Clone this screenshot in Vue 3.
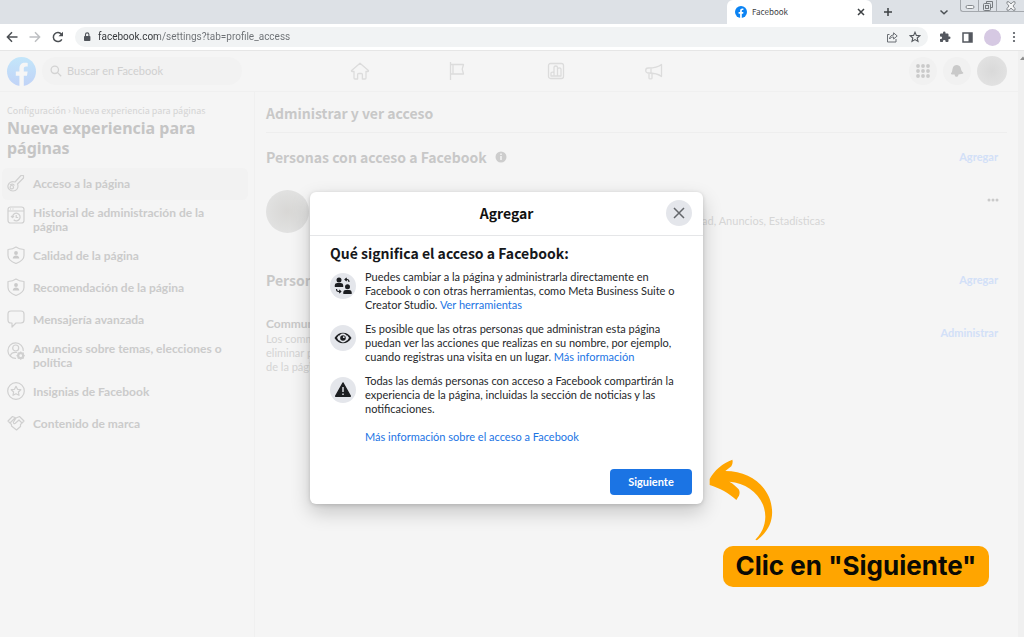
<script setup>
const menu = [
  { text: 'Acceso a la página', icon: 'key', active: true },
  { text: 'Historial de administración de la página', icon: 'history' },
  { text: 'Calidad de la página', icon: 'shield' },
  { text: 'Recomendación de la página', icon: 'shield' },
  { text: 'Mensajería avanzada', icon: 'chat' },
  { text: 'Anuncios sobre temas, elecciones o política', icon: 'usergear' },
  { text: 'Insignias de Facebook', icon: 'badge' },
  { text: 'Contenido de marca', icon: 'hands' },
]
</script>

<template>
  <div class="browser">
    <div class="tabs">
      <div class="tab">
        <svg class="favicon" viewBox="0 0 24 24" aria-hidden="true">
          <circle cx="12" cy="12" r="12" fill="#0b83f3" />
          <path d="M10.2 24v-8.6H7.2V12h3V9.5c0-3 1.8-4.7 4.5-4.7 1 0 2.1.2 2.1.2v2.900h-1.400c-1.400 0-1.800.9-1.800 1.800V12h3.200l-.5 3.400h-2.700V24z" fill="#fff" />
        </svg>
        <span class="tab-title">Facebook</span>
        <button class="bare" aria-label="Cerrar pestaña">
          <svg width="8" height="8" viewBox="0 0 8 8"><path d="M1 1l6 6M7 1L1 7" stroke="#3c4043" stroke-width="1.5" /></svg>
        </button>
      </div>
      <button class="bare plus" aria-label="Nueva pestaña">
        <svg width="10" height="10" viewBox="0 0 10 10"><path d="M5 1v8M1 5h8" stroke="#3c4043" stroke-width="1.5" /></svg>
      </button>
      <button class="bare chevron" aria-label="Buscar pestañas">
        <svg width="10" height="10" viewBox="0 0 10 10"><path d="M1.5 3.5L5 6.8l3.500-3.300" fill="none" stroke="#4b5054" stroke-width="1.5" /></svg>
      </button>
      <div class="window">
        <button class="bare" aria-label="Minimizar">
          <svg width="10" height="10" viewBox="0 0 10 10"><rect x="1" y="4.500" width="8" height="3" rx="1.500" fill="#f4f5f6" stroke="#85898d" /></svg>
        </button>
        <button class="bare" aria-label="Restaurar">
          <svg width="10" height="10" viewBox="0 0 10 10" fill="none" stroke="#777b7f"><path d="M3.500 2.500v-2h6v6h-2" /><rect x=".5" y="2.500" width="7" height="7" rx="1" /><rect x="2.500" y="4.500" width="3" height="3" /></svg>
        </button>
        <button class="bare wide" aria-label="Cerrar">
          <svg width="10" height="10" viewBox="0 0 10 10"><path d="M1 .8h2L5 3 7 .8h2v1.700L7 5l2 2.500v1.700H7L5 7 3 9.200H1V7.500L3 5 1 2.500z" fill="#f4f5f6" stroke="#85898d" /></svg>
        </button>
      </div>
    </div>

    <div class="toolbar">
      <button class="bare" aria-label="Atrás">
        <svg width="12" height="12" viewBox="0 0 12 12" fill="none" stroke="#4b4f53" stroke-width="1.5"><path d="M11.500 6H1.500M6 1.300L1.400 6 6 10.700" /></svg>
      </button>
      <button class="bare" aria-label="Adelante">
        <svg width="12" height="12" viewBox="0 0 12 12" fill="none" stroke="#bdbfc2" stroke-width="1.500"><path d="M.5 6h10M6 1.300L10.600 6 6 10.700" /></svg>
      </button>
      <button class="bare" aria-label="Recargar">
        <svg width="12" height="12" viewBox="0 0 12 12"><path d="M9.800 8.300a4.500 4.500 0 1 1-.4-5" fill="none" stroke="#4b4f53" stroke-width="1.500" /><path d="M11 .8v4.500H6.500z" fill="#4b4f53" /></svg>
      </button>
      <div class="address">
        <svg width="8" height="10" viewBox="0 0 8 10"><rect x="1" y="4" width="6.400" height="5" rx=".8" fill="#50545a" /><path d="M2.500 4V2.600a1.700 1.700 0 0 1 3.400 0V4" fill="none" stroke="#50545a" stroke-width="1.100" /></svg>
        <input class="url" aria-label="Dirección" value="facebook.com/settings?tab=profile_access" />
        <button class="bare" aria-label="Compartir">
          <svg width="12" height="12" viewBox="0 0 12 12" fill="none" stroke="#6b6f74"><path d="M3.500 3.500h-2v7.500h8.500V8" /><path d="M3.500 8C3.800 5.500 5.200 4 7.600 4V1.800L11.200 5 7.600 8V6C5.800 6 4.500 6.600 3.500 8z" /></svg>
        </button>
        <button class="bare" aria-label="Favoritos">
          <svg width="12" height="12" viewBox="0 0 12 12"><path d="M6 1.200l1.400 3.200 3.500.3-2.700 2.300.8 3.400-3-1.800-3 1.800.8-3.400L1.100 4.700l3.500-.3z" fill="none" stroke="#54585d" stroke-width="1.100" /></svg>
        </button>
      </div>
      <button class="bare" aria-label="Extensiones">
        <svg width="12" height="12" viewBox="0 0 24 24"><path d="M20.500 11H19V7a2 2 0 0 0-2-2h-4V3.500a2.500 2.500 0 0 0-5 0V5H4a2 2 0 0 0-2 2v3.800h1.500a2.700 2.700 0 0 1 0 5.400H2V20c0 1.100.9 2 2 2h3.800v-1.500a2.700 2.700 0 0 1 5.400 0V22H17a2 2 0 0 0 2-2v-4h1.500a2.500 2.500 0 0 0 0-5z" fill="#54585f" /></svg>
      </button>
      <button class="bare" aria-label="Panel lateral">
        <svg width="11" height="11" viewBox="0 0 11 11"><rect x="1" y="1" width="9" height="9" fill="none" stroke="#54585f" stroke-width="1.500" /><path d="M6.500 1H10v9H6.500z" fill="#54585f" /></svg>
      </button>
      <button class="profile" aria-label="Perfil"></button>
      <button class="bare" aria-label="Menú">
        <svg width="4" height="12" viewBox="0 0 4 12" fill="#54585f"><circle cx="2" cy="2" r="1.100" /><circle cx="2" cy="6" r="1.100" /><circle cx="2" cy="10" r="1.100" /></svg>
      </button>
    </div>

    <div class="viewport">
      <div class="page">
        <header class="top">
          <div class="brand">
            <svg class="logo" viewBox="0 0 28 28" aria-hidden="true">
              <defs><linearGradient id="lg" x1="0" y1="0" x2="0" y2="1"><stop offset="0" stop-color="#c3e6fa" /><stop offset="1" stop-color="#c1d3f7" /></linearGradient></defs>
              <circle cx="14" cy="14" r="14" fill="url(#lg)" />
              <path d="M12 28V18H8.500v-4H12v-3c0-3.600 2.100-5.500 5.300-5.500 1.500 0 2.700.2 2.700.2v3.400h-1.700c-1.700 0-2.100 1-2.100 2V14h3.700l-.6 4h-3.100v10z" fill="#f6f6f6" />
            </svg>
            <label class="search">
              <svg width="12" height="12" viewBox="0 0 12 12" fill="none" stroke="#d3d3d3" stroke-width="1.300"><circle cx="4.800" cy="4.800" r="3.700" /><path d="M7.600 7.600l3.600 3.600" /></svg>
              <input type="search" placeholder="Buscar en Facebook" aria-label="Buscar en Facebook" />
            </label>
          </div>
          <nav class="nav">
            <a href="#" aria-label="Inicio"><svg width="20" height="20" viewBox="0 0 20 20"><path d="M10 2.200L1.600 9.500c-.3.400 0 1 .6 1H4V17c0 .6.400 1 1 1h2.600v-4.500c0-.6.400-1 1-1h2.800c.6 0 1 .4 1 1V18H15c.6 0 1-.4 1-1v-6.500h1.800c.6 0 .9-.6.600-1z" /></svg></a>
            <a href="#" aria-label="Páginas"><svg width="20" height="20" viewBox="0 0 20 20"><path d="M2.500 1v18M2.500 3.500h13l-1.300 4.700 1.300 4.800h-13M5 3.500V13" /></svg></a>
            <a href="#" aria-label="Estadísticas"><svg width="20" height="20" viewBox="0 0 20 20"><rect x="2.500" y="2.500" width="15" height="15" rx="2" /><path d="M5 15v-3c0-1.300 3-1.300 3 0v3zM8 15V6.500C8 4.500 11.500 4.500 11.500 6.500V15zM11.500 15V8c0-1.500 3.500-1.500 3.500 0v7z" /></svg></a>
            <a href="#" aria-label="Anuncios"><svg width="20" height="20" viewBox="0 0 20 20"><path d="M17.500 3.500v12C14 12.500 10 12 4 12c-3 0-3-5 0-5 6 0 10-.5 13.500-3.500zM7 7v5M5 12v5.200c0 1 3 1 3 0V12" /></svg></a>
          </nav>
          <div class="tools">
            <button class="circle" aria-label="Menú"><svg width="14" height="14" viewBox="0 0 14 14" fill="#cacaca"><template v-for="r in 3" :key="r"><circle v-for="c in 3" :key="c" :cx="c * 5 - 3" :cy="r * 5 - 3" r="1.900" /></template></svg></button>
            <button class="circle" aria-label="Notificaciones"><svg width="14" height="14" viewBox="0 0 14 14"><path d="M2 10.500c-1 0-1.300-.8-.8-1.400C2.500 7.500 2 6.500 2.700 4.300 3.300 2.100 5 1 7 1.100c2.500.2 3.600 2 4 4 .3 1.700.9 2.500 1.900 3.200.7.500.5 1.300-.3 1.500L8.500 10.500c-.2 1.500-1 2.300-2 2.300s-1.800-.8-1.900-2.300z" fill="#c9c9c9" /></svg></button>
            <button class="avatar-small" aria-label="Cuenta"></button>
          </div>
        </header>

        <div class="columns">
          <aside class="side">
            <p class="crumbs">Configuración › Nueva experiencia para páginas</p>
            <h1>Nueva experiencia para páginas</h1>
            <a v-for="item in menu" :key="item.text" href="#" class="item" :class="{ active: item.active }">
              <svg v-if="item.icon === 'key'" class="icon" viewBox="0 0 18 18"><path d="M8 8L14 1.500h2.500V4L10.500 10c1.500 4-1 7-4.500 7-3.500 0-5.500-3-5-5.500C1.700 8.500 4.500 7 8 8z" /><circle cx="4.800" cy="13.200" r="1.700" /><path d="M3 11c2-1.200 3.500-1 4.500.5" /></svg>
              <svg v-else-if="item.icon === 'history'" class="icon" viewBox="0 0 18 18"><rect x="1" y="1" width="16" height="16" rx="2.500" /><path d="M1 5h16M3 3h1M5.500 3h1M5.500 11a3.800 3.800 0 1 1 1.200 2.800M4 10l1.500 1.500L7 10M9.200 9v2.500h2" /></svg>
              <svg v-else-if="item.icon === 'shield'" class="icon" viewBox="0 0 18 18"><path d="M9 1c2.500 1.800 5 2.300 8 2.500v6c0 4-4 6.500-8 8-4-1.500-8-4-8-8v-6C4 3.300 6.500 2.800 9 1z" /><circle class="solid" cx="9" cy="7" r="1.900" /><path class="solid" d="M5.700 12.500c0-4 6.600-4 6.600 0z" /></svg>
              <svg v-else-if="item.icon === 'chat'" class="icon" viewBox="0 0 18 18"><path d="M4 1h10c2 0 3 1 3 3v6c0 2-1 3-3 3H9l-4 4v-4H4c-2 0-3-1-3-3V4c0-2 1-3 3-3z" /></svg>
              <svg v-else-if="item.icon === 'usergear'" class="icon" viewBox="0 0 18 18"><path d="M9 16.300A7.700 7.700 0 1 1 16.300 9M3.300 14c.7-3 3-4 6.700-3.500" /><circle cx="8.700" cy="6" r="3" /><circle cx="13.700" cy="13.700" r="2.500" stroke-width="2.200" /><path d="M13.700 9.500v8.400M9.500 13.700h8.400M10.700 10.700l6 6M16.700 10.700l-6 6" stroke-dasharray="1.500 5.200" /></svg>
              <svg v-else-if="item.icon === 'badge'" class="icon" viewBox="0 0 18 18"><circle cx="9" cy="9" r="8.300" /><path d="M9 4.300l1.500 3 3.300.4-2.400 2.300.6 3.300L9 11.700l-3 1.600.6-3.300-2.400-2.300 3.300-.4z" /></svg>
              <svg v-else class="icon" viewBox="0 0 18 18"><path d="M1 7l4.500-4.500L9 4l3.500-1.500L17 7l-3.500 3.500v2L9.500 16 4.500 12V10.500zM3 9l5-5M15 9l-3-3-4 3.500c-1 .5-2-.5-1.500-1.500L9 4" /></svg>
              <span>{{ item.text }}</span>
            </a>
          </aside>

          <main class="content">
            <h2 class="heading">Administrar y ver acceso</h2>
            <div class="row first">
              <h2>Personas con acceso a Facebook
                <svg width="12" height="12" viewBox="0 0 12 12"><circle cx="6" cy="6" r="5.500" fill="#cdcdcd" /><path d="M6 5v4M6 2.500v1.500" stroke="#f5f5f5" stroke-width="1.500" /></svg>
              </h2>
              <a href="#">Agregar</a>
            </div>
            <div class="person">
              <div class="avatar"></div>
              <p>Actividad de la comunidad, Anuncios, Estadísticas</p>
              <button class="bare" aria-label="Más opciones"><svg width="12" height="4" viewBox="0 0 12 4" fill="#cacaca"><circle cx="2" cy="2" r="1.500" /><circle cx="6" cy="2" r="1.500" /><circle cx="10" cy="2" r="1.500" /></svg></button>
            </div>
            <div class="row">
              <h2>Personas</h2>
              <a href="#">Agregar</a>
            </div>
            <div class="row managers">
              <div>
                <h3>Community</h3>
                <p>Los community<br />eliminar posts<br />de la página.</p>
              </div>
              <a href="#">Administrar</a>
            </div>
          </main>
        </div>

        <div class="overlay">
          <section class="dialog" role="dialog" aria-labelledby="dlg-title">
            <header>
              <h2 id="dlg-title">Agregar</h2>
              <button class="close" aria-label="Cerrar"><svg width="12" height="12" viewBox="0 0 12 12"><path d="M1 1l10 10M11 1L1 11" stroke="#64676b" stroke-width="1.500" /></svg></button>
            </header>
            <div class="body">
              <h3>Qué significa el acceso a Facebook:</h3>
              <div class="point">
                <span class="disc"><svg width="18" height="18" viewBox="0 0 18 18" fill="#1c1e21"><circle cx="5" cy="3" r="2.500" /><path d="M.8 10V8.500C.8 6.800 2 6 3.300 6h3.400c1.300 0 2.500.8 2.500 2.500V10z" /><circle cx="13.500" cy="9.800" r="2.500" /><path d="M9.300 17v-1.500c0-1.700 1.200-2.500 2.500-2.500h3.400c1.300 0 2.500.8 2.500 2.500V17z" /><path d="M11.500 2.500h1.500c1.500 0 2 .8 2 2.500M12.700 1l-1.700 1.500 1.700 1.500M2.500 12c0 2 .8 2.500 2 2.500h2M5.200 13l1.600 1.500-1.600 1.500" fill="none" stroke="#1c1e21" stroke-width="1.100" /></svg></span>
                <p>Puedes cambiar a la página y administrarla directamente en Facebook o con otras herramientas, como Meta Business Suite o Creator Studio. <a href="#">Ver herramientas</a></p>
              </div>
              <div class="point">
                <span class="disc"><svg width="18" height="18" viewBox="0 0 18 18"><path d="M.5 9C4.500 2 13.500 2 17.500 9c-4 7-13 7-17 0z" fill="#1c1e21" /><circle cx="9" cy="9" r="3.600" fill="#1c1e21" stroke="#e4e6eb" stroke-width="1.600" /><path d="M3 8.800C4 7 5 6.300 5.600 6c-.8 2-.8 4 0 6C4.600 11.500 3.600 10.400 3 8.800zM15 8.800C14 7 13 6.300 12.400 6c.8 2 .8 4 0 6 1-.5 2-1.600 2.600-3.200z" fill="#e4e6eb" /><circle cx="9.800" cy="8.200" r=".9" fill="#e4e6eb" /></svg></span>
                <p>Es posible que las otras personas que administran esta página puedan ver las acciones que realizas en su nombre, por ejemplo, cuando registras una visita en un lugar. <a href="#">Más información</a></p>
              </div>
              <div class="point">
                <span class="disc"><svg width="18" height="18" viewBox="0 0 18 18"><path d="M9 2l7.300 13.200H1.700z" fill="#1c1e21" stroke="#1c1e21" stroke-width="1.500" stroke-linejoin="round" /><path d="M9 6v5M9 12.500V14" stroke="#e4e6eb" stroke-width="1.400" /></svg></span>
                <p>Todas las demás personas con acceso a Facebook compartirán la experiencia de la página, incluidas la sección de noticias y las notificaciones.</p>
              </div>
              <a class="more" href="#">Más información sobre el acceso a Facebook</a>
            </div>
            <footer><button class="next">Siguiente</button></footer>
          </section>
        </div>
      </div>
      <div class="scroll"><svg width="6" height="5" viewBox="0 0 6 5"><path d="M2 5l3-3.500 1 1V5z" fill="#8c8c8c" /></svg></div>
    </div>

    <div class="callout">
      <svg class="arrow" viewBox="58 58 192 246" aria-hidden="true"><path d="M60 118V136C90 145 118 160 140 181C143 176 144 173 148 168C151 160 150 153 147 149C139 140 130 132 119 126C165 130 203 155 220 195C235 235 225 272 197 300L202 302C235 277 250 245 247 210C243 145 185 94 107 94L125 80C129 73 130 66 128 60C100 70 73 92 60 118Z" fill="#ffa500" /></svg>
      <div class="note">Clic en "Siguiente"</div>
    </div>
  </div>
</template>

<style>
body { margin: 0; }
</style>

<style scoped>
* { box-sizing: border-box; }
.browser { position: relative; display: flex; flex-direction: column; height: 100vh; overflow: hidden; font: 11px/14px Lato, "Noto Sans", sans-serif; background: #f5f5f5; }
h1, h2, h3, p { margin: 0; }
a { text-decoration: none; }
button, input { font: inherit; border: 0; padding: 0; background: none; outline: 0; }
svg { flex: none; }
.bare { display: flex; align-items: center; justify-content: center; }

.tabs { display: flex; align-items: center; justify-content: flex-end; height: 24px; background: #dde1e6; }
.tab { display: flex; align-items: center; gap: 5px; width: 145px; height: 24px; padding: 0 7px 0 8px; background: #fff; border-radius: 6px 6px 0 0; }
.favicon { width: 12px; height: 12px; }
.tab-title { flex: 1; font: 8px/12px "Noto Sans CJK JP", sans-serif; color: #3c4043; }
.plus { margin-left: 11px; }
.chevron { margin-left: 46px; }
.window { display: flex; align-self: flex-start; height: 12px; margin-left: 11px; border: 1px solid #a4a8ad; border-width: 0 0 1px 1px; border-radius: 0 0 0 3px; }
.window .bare { width: 18px; border-right: 1px solid #a4a8ad; }
.window .wide { width: 27px; border-right: 0; }

.toolbar { display: flex; align-items: center; gap: 11px; height: 27px; padding: 0 8px 0 6px; background: #fff; border-bottom: 1px solid #e6e6e6; }
.address { display: flex; flex: 1; align-items: center; gap: 11px; height: 20px; padding: 0 7px 0 8px; border-radius: 10px; background: #f1f3f4; }
.url { flex: 1; min-width: 0; margin-left: -4px; height: 20px; font-family: Roboto, sans-serif; font-size: 10px; line-height: 20px; color: transparent; background: linear-gradient(90deg, #333639 61px, #6c7074 61px); -webkit-background-clip: text; background-clip: text; }
.profile { width: 17px; height: 17px; border-radius: 50%; background: #d6c9e3; }

.viewport { display: flex; flex: 1; min-height: 0; }
.page { position: relative; flex: 1; display: flex; flex-direction: column; }
.scroll { display: flex; justify-content: flex-end; width: 6px; padding-top: 4px; background: #f0f0f0; }
.top { display: grid; grid-template-columns: 1fr auto 1fr; align-items: center; height: 41px; padding: 0 11px 0 7px; border-bottom: 1px solid #f0f0f0; }
.brand { display: flex; align-items: center; gap: 6px; }
.logo { width: 29px; height: 29px; }
.search { display: flex; align-items: center; gap: 5px; width: 200px; height: 28px; margin-right: -60px; padding: 0 8px; border-radius: 14px; background: #f2f2f2; }
.search input { width: 150px; }
.search input::placeholder { color: #d0d0d0; }
.nav { display: flex; }
.nav a { display: flex; justify-content: center; width: 98px; }
.nav svg { fill: none; stroke: #dcdcdc; stroke-width: 1.300; stroke-linejoin: round; }
.tools { display: flex; align-items: center; justify-content: flex-end; gap: 6px; }
.circle { display: flex; align-items: center; justify-content: center; width: 28px; height: 28px; border-radius: 50%; background: #f1f1f1; }
.avatar-small { width: 30px; height: 30px; border-radius: 50%; background: radial-gradient(#d9d9d9, #e0e0e0 60%, #e4e4e4); }

.columns { display: grid; grid-template-columns: 255px 1fr; flex: 1; }
.side { padding: 12px 6px 0 2px; border-right: 1px solid #f0f0f0; color: #c6c6c6; }
.crumbs { padding-left: 5px; font-family: "Noto Sans CJK JP", sans-serif; font-size: 9px; color: #d4d4d4; }
h1 { padding: 0 30px 10px 5px; font-family: "Noto Sans", sans-serif; font-size: 16px; line-height: 20px; font-weight: 700; color: #c5c5c5; }
.item { display: flex; align-items: center; gap: 8px; min-height: 32px; padding: 6px 12px 6px 5px; border-radius: 6px; font-size: 12px; font-weight: 700; color: #cbcbcb; }
.item.active { background: #f2f2f2; }
.icon { width: 18px; height: 18px; fill: none; stroke: #d0d0d0; stroke-width: 1.200; stroke-linejoin: round; align-self: flex-start; }
.icon .solid { fill: #cacaca; stroke: none; }

.content { padding: 0 11px; color: #c6c6c6; }
.content h2 { font: 700 14px/20px "Noto Sans CJK JP", sans-serif; color: #c8c8c8; }
.content a { font-weight: 700; color: #d2e0f8; }
.content .heading { padding: 11px 0 9px; border-bottom: 1px solid #eee; }
.row { display: flex; align-items: center; justify-content: space-between; padding-right: 9px; }
.first { padding-top: 14px; }
.row h2 { display: flex; align-items: center; gap: 8px; }
.person { display: flex; justify-content: space-between; padding: 23px 8px 37px 0; }
.avatar { width: 43px; height: 43px; border-radius: 50%; background: radial-gradient(#d8d7d5, #dededd 50%, #e6e6e6); }
.person p { flex: 1; max-width: 516px; padding-top: 24px; text-align: right; color: #d6d6d6; }
.person .bare { height: 20px; margin-left: auto; }
.managers { align-items: flex-start; padding-top: 25px; }
.managers h3 { font-size: 12px; line-height: 17px; font-weight: 700; color: #c9c9c9; }
.managers p { color: #d4d4d4; }
.managers a { padding-top: 11px; }

.overlay { position: absolute; inset: 0; display: flex; align-items: center; justify-content: center; padding: 7px 5px 0 0; }
.dialog { width: 393px; background: #fff; border-radius: 6px; box-shadow: 0 8px 20px rgba(0, 0, 0, .2), 0 1px 4px rgba(0, 0, 0, .15); color: #26282b; }
.dialog header { display: grid; grid-template-columns: 26px 1fr 26px; align-items: center; height: 44px; padding: 0 11px; border-bottom: 1px solid #e5e6e8; }
.dialog h2 { grid-column: 2; text-align: center; font: 700 14px/18px "Noto Sans CJK JP", sans-serif; color: #111; }
.close, .disc { display: flex; align-items: center; justify-content: center; flex: none; width: 26px; height: 26px; border-radius: 50%; background: #e4e6eb; }
.body { padding: 7px 20px 0; }
.body h3 { margin-bottom: 7px; font: 700 14px/20px "Noto Sans CJK JP", sans-serif; color: #16181b; }
.point { display: flex; gap: 9px; margin-bottom: 10px; }
.point .disc { margin-top: 3px; }
.point p { flex: 1; margin-right: -8px; }
.dialog a { color: #1b74e4; }
.more { display: block; margin: 14px 0 0 35px; }
.dialog footer { display: flex; justify-content: flex-end; padding: 25px 11px 9px; }
.next { width: 82px; height: 26px; border-radius: 4px; background: #1b74e4; color: #fff; font-weight: 700; }

.callout { position: absolute; right: 35px; bottom: 50px; width: 280px; }
.arrow { display: block; width: 64px; height: 82px; }
.note { margin: 5px 0 0 14px; height: 41px; border-radius: 10px; background: #ffa500; color: #0a0a05; text-align: center; font: 700 26px/40px Inter, sans-serif; white-space: nowrap; }
</style>
